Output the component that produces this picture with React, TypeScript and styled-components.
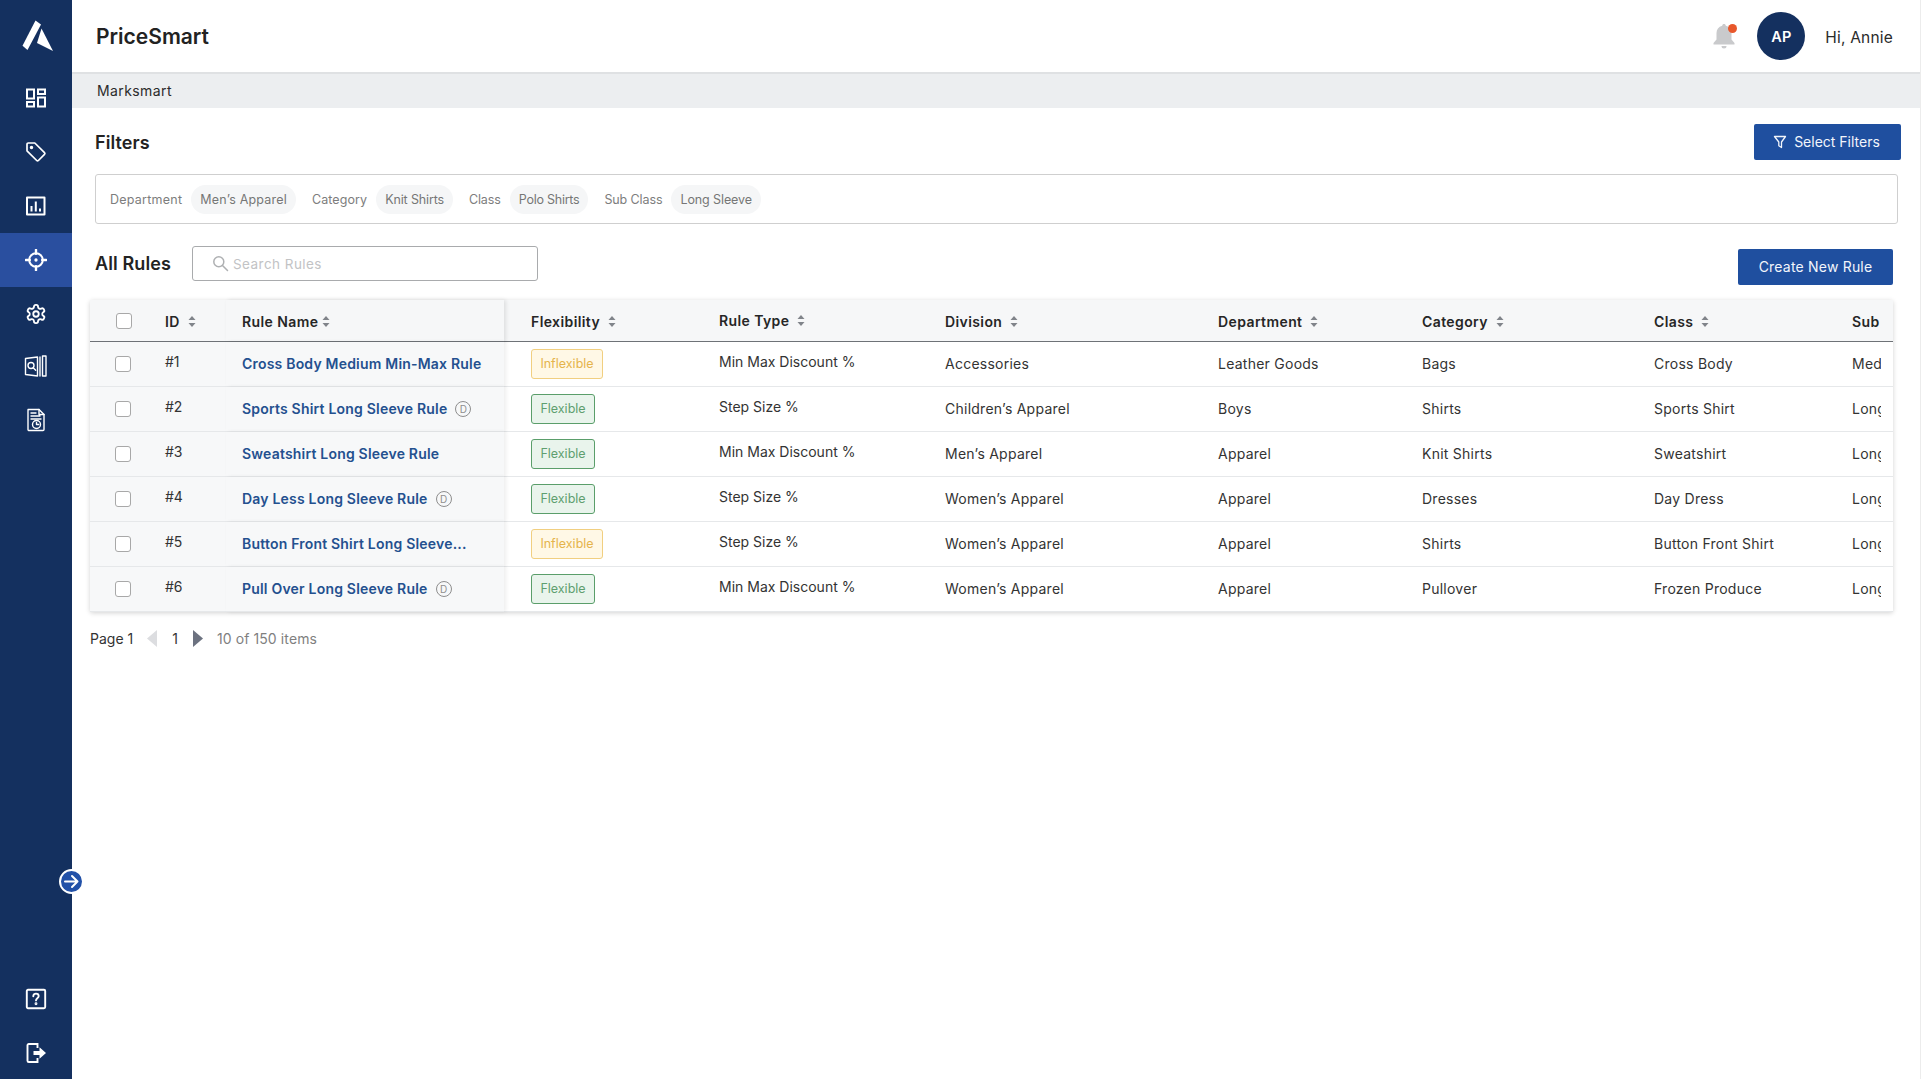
import React from "react";
import styled, { createGlobalStyle } from "styled-components";

const Global = createGlobalStyle`
  html, body { margin: 0; padding: 0; background: #fff; }
  body { font-family: Inter, "Noto Sans", "Liberation Sans", sans-serif; color: #2a2a2a; overflow: hidden; }
  * { box-sizing: border-box; }
`;

const Shell = styled.div`
  display: flex;
  width: 1921px;
  height: 1079px;
  border-right: 1px solid #ececec;
`;
const Sidebar = styled.aside`
  width: 72px;
  flex: none;
  background: #14305f;
  display: flex;
  flex-direction: column;
  position: relative;
`;
const LogoSlot = styled.div`
  height: 71px;
  display: flex;
  align-items: center;
  justify-content: center;
`;
const NavItem = styled.div<{ $active?: boolean; $h?: number }>`
  height: ${(p) => p.$h ?? 54}px;
  display: flex;
  align-items: center;
  justify-content: center;
  background: ${(p) => (p.$active ? "#2a4f9f" : "transparent")};
`;
const NavSpacer = styled.div`
  flex: 1;
`;
const Collapse = styled.button`
  position: absolute;
  left: 59px;
  top: 869px;
  width: 25px;
  height: 25px;
  padding: 0;
  border-radius: 50%;
  border: 2px solid #fff;
  background: #2251a8;
  display: flex;
  align-items: center;
  justify-content: center;
`;
const Main = styled.main`
  flex: 1;
  min-width: 0;
  display: flex;
  flex-direction: column;
`;
const Header = styled.header`
  height: 72px;
  flex: none;
  display: flex;
  align-items: center;
  padding: 0 27px 0 24px;
`;
const Brand = styled.div`
  font-size: 21px;
  font-weight: 600;
  color: #222;
  flex: 1;
`;
const Bell = styled.div`
  position: relative;
  width: 26px;
  height: 28px;
  margin-right: 20px;
`;
const BellDot = styled.span`
  position: absolute;
  top: 2px;
  right: 0;
  width: 9px;
  height: 9px;
  border-radius: 50%;
  background: #e8572b;
`;
const Avatar = styled.div`
  width: 48px;
  height: 48px;
  border-radius: 50%;
  background: #14305f;
  color: #fff;
  font-size: 14.5px;
  font-weight: 600;
  display: flex;
  align-items: center;
  justify-content: center;
`;
const Greeting = styled.div`
  margin-left: 20px;
  padding-top: 2px;
  font-size: 15.5px;
  letter-spacing: 0.2px;
  color: #2a2a2a;
`;
const Crumb = styled.div`
  height: 36px;
  flex: none;
  background: #eceef0;
  border-top: 2px solid #dfe1e3;
  padding: 0 0 2px 25px;
  display: flex;
  align-items: center;
  font-size: 14px;
  letter-spacing: 0.4px;
  color: #2b2b2b;
`;
const Content = styled.div`
  padding: 16px 19px 0 23px;
`;
const SpreadRow = styled.div`
  display: flex;
  align-items: center;
  justify-content: space-between;
`;
const SectionTitle = styled.h2`
  margin: 0;
  font-size: 18px;
  font-weight: 600;
  letter-spacing: 0.1px;
  color: #232323;
`;
const PrimaryButton = styled.button`
  height: 36px;
  border: 0;
  border-radius: 2px;
  background: #1f4f9f;
  color: #f2f5fb;
  font: 400 14px Inter, "Noto Sans", sans-serif;
  display: flex;
  align-items: center;
  justify-content: center;
  gap: 7px;
  padding: 0 0 1px;
`;
const FilterButton = styled(PrimaryButton)`
  width: 147px;
  padding-right: 2px;
`;
const CreateButton = styled(PrimaryButton)`
  width: 155px;
  margin-top: 3px;
  margin-right: 8px;
  letter-spacing: 0.2px;
`;
const FilterBox = styled.div`
  margin: 14px 3px 0 0;
  height: 50px;
  border: 1px solid #cfcfcf;
  border-radius: 3px;
  padding-left: 14px;
  display: flex;
  align-items: center;
`;
const FilterLabel = styled.span<{ $track: number }>`
  font-size: 12.5px;
  letter-spacing: ${(p) => p.$track}px;
  color: #7d7d7d;
  margin-right: 9px;
`;
const Chip = styled.span<{ $track: number }>`
  height: 29px;
  padding: 0 9px;
  border-radius: 15px;
  background: #f5f6f7;
  font-size: 12.5px;
  letter-spacing: ${(p) => p.$track}px;
  color: #767676;
  display: flex;
  align-items: center;
  margin-right: 16px;
`;
const RulesBar = styled.div`
  display: flex;
  align-items: flex-start;
  margin-top: 22px;
`;
const RulesTitle = styled(SectionTitle)`
  line-height: 35px;
  width: 97px;
`;
const Search = styled.div`
  width: 346px;
  height: 35px;
  border: 1px solid #a9abad;
  border-radius: 3px;
  display: flex;
  align-items: center;
  gap: 4px;
  padding-left: 19px;
  font-size: 13.5px;
  letter-spacing: 0.45px;
  color: #c2c3c5;
`;
const BarSpacer = styled.div`
  flex: 1;
`;
const TableCard = styled.div`
  margin: 15px 8px 0 -5px;
  box-shadow: 0 1px 5px rgba(0, 0, 0, 0.18);
  border-radius: 2px;
`;
const Table = styled.table`
  width: 1803px;
  table-layout: fixed;
  border-collapse: separate;
  border-spacing: 0;
`;
const Th = styled.th<{ $frozen?: boolean; $edge?: boolean; $pad?: number; $raised?: boolean }>`
  height: 41.5px;
  padding: ${(p) => (p.$raised ? 0 : 2)}px 0 0 ${(p) => p.$pad ?? 16}px;
  text-align: left;
  font-size: 14px;
  font-weight: 600;
  letter-spacing: 0.4px;
  color: #262626;
  background: #f6f7f8;
  border-bottom: 1px solid #6e7277;
  white-space: nowrap;
  overflow: hidden;
  ${(p) => p.$frozen && "position: sticky; left: 0; z-index: 1; overflow: visible;"}
  ${(p) => p.$edge && "box-shadow: 2px 0 4px rgba(0,0,0,.1);"}
`;
const Td = styled.td<{ $frozen?: boolean; $edge?: boolean; $pad?: number; $raised?: boolean }>`
  height: 45px;
  padding: 0 0 ${(p) => (p.$raised ? 4 : 0)}px ${(p) => p.$pad ?? 16}px;
  font-size: 14px;
  letter-spacing: ${(p) => (p.$raised ? 0 : 0.25)}px;
  color: #333;
  background: ${(p) => (p.$frozen ? "#f7f8f9" : "#fff")};
  border-bottom: 1px solid #e6e8ea;
  white-space: nowrap;
  ${(p) => p.$frozen && "position: sticky; left: 0; z-index: 1;"}
  ${(p) => p.$edge && "box-shadow: 2px 0 4px rgba(0,0,0,.07);"}
`;
const ClippedText = styled.div`
  width: 29px;
  overflow: hidden;
`;
const Check = styled.span`
  display: block;
  width: 16px;
  height: 16px;
  background: #fff;
  border: 1px solid #a8a8a8;
  border-radius: 3px;
`;
const SortLabel = styled.span<{ $gap?: number }>`
  display: inline-flex;
  align-items: center;
  gap: ${(p) => p.$gap ?? 8}px;
`;
const RuleLink = styled.span`
  display: inline-flex;
  align-items: center;
  gap: 8px;
  font-weight: 600;
  letter-spacing: 0.2px;
  color: #24508f;
`;
const DraftMark = styled.span`
  width: 16px;
  height: 16px;
  border: 1px solid #8e8e8e;
  border-radius: 50%;
  font-size: 10px;
  font-weight: 400;
  letter-spacing: 0;
  color: #8e8e8e;
  display: inline-flex;
  align-items: center;
  justify-content: center;
`;
const Badge = styled.span<{ $ok: boolean }>`
  display: inline-flex;
  align-items: center;
  justify-content: center;
  height: 30px;
  width: ${(p) => (p.$ok ? 64 : 72)}px;
  font-size: 12.5px;
  letter-spacing: 0;
  border-radius: 3px;
  border: 1px solid ${(p) => (p.$ok ? "#5a9e6a" : "#f1cf80")};
  background: ${(p) => (p.$ok ? "#e9f4ec" : "#fff8e6")};
  color: ${(p) => (p.$ok ? "#5f9f70" : "#e5b44c")};
`;
const Pager = styled.div`
  margin: 15px 0 0 -5px;
  height: 24px;
  display: flex;
  align-items: center;
  font-size: 14px;
  color: #333;
`;
const PageNumber = styled.span`
  margin: 0 15px;
`;
const PageInfo = styled.span`
  margin-left: 14px;
  letter-spacing: 0.1px;
  color: #7f7f7f;
`;
const PrevSlot = styled.span`
  display: flex;
  margin-left: 14px;
`;

const stroke = { fill: "none", stroke: "#fff", strokeWidth: 1.7, strokeLinejoin: "round" as const, strokeLinecap: "round" as const };

const Logo = () => (
  <svg width="36" height="34" viewBox="18 18 36 34" fill="#fff">
    <path d="M35.500 19.500l5.500 4-13.500 25.500-5-4.200z" />
    <path d="M41.500 27.500L53 50l-16-8z" />
  </svg>
);
const GridIcon = () => (
  <svg width="22" height="22" viewBox="0 0 22 22" {...stroke} strokeWidth={2} strokeLinejoin="miter">
    <rect x="2" y="2.500" width="7" height="9" /><rect x="13" y="2.500" width="7" height="4.500" />
    <rect x="13" y="10.500" width="7" height="9" /><rect x="2" y="15" width="7" height="4.500" />
  </svg>
);
const TagIcon = () => (
  <svg width="22" height="22" viewBox="0 0 22 22" {...stroke}>
    <path d="M2 3.200c0-.7.5-1.200 1.200-1.200h6.600l9.700 9.700c.5.5.5 1.200 0 1.700l-6.100 6.100c-.5.5-1.200.5-1.700 0L2 9.800z" />
    <circle cx="6.500" cy="6.500" r=".9" />
  </svg>
);
const ChartIcon = () => (
  <svg width="22" height="22" viewBox="0 0 22 22" {...stroke}>
    <rect x="2" y="2.500" width="17.500" height="17" strokeWidth="2" />
    <path d="M6.500 16.500V11M10.800 16.500V6.500M15 16.500V13.500" strokeWidth="2" strokeLinecap="butt" />
  </svg>
);
const TargetIcon = () => (
  <svg width="22" height="22" viewBox="0 0 22 22" {...stroke}>
    <circle cx="11" cy="11" r="6.800" strokeWidth="2" />
    <path d="M11 .8v4M11 17.200v4M.8 11h4M17.200 11h4" strokeWidth="2.400" />
    <circle cx="11" cy="11" r=".8" fill="#fff" />
  </svg>
);
const GearIcon = () => (
  <svg width="22" height="22" viewBox="0 0 24 24" {...stroke} strokeWidth={2}>
    <path d="M12.220 2h-.440a2 2 0 0 0-2 2v.180a2 2 0 0 1-1 1.730l-.430.250a2 2 0 0 1-2 0l-.150-.080a2 2 0 0 0-2.730.730l-.220.380a2 2 0 0 0 .730 2.730l.150.100a2 2 0 0 1 1 1.720v.510a2 2 0 0 1-1 1.740l-.150.090a2 2 0 0 0-.730 2.730l.220.380a2 2 0 0 0 2.730.730l.150-.080a2 2 0 0 1 2 0l.430.250a2 2 0 0 1 1 1.730V20a2 2 0 0 0 2 2h.440a2 2 0 0 0 2-2v-.180a2 2 0 0 1 1-1.730l.430-.250a2 2 0 0 1 2 0l.150.080a2 2 0 0 0 2.730-.730l.220-.390a2 2 0 0 0-.730-2.730l-.150-.080a2 2 0 0 1-1-1.740v-.500a2 2 0 0 1 1-1.740l.150-.090a2 2 0 0 0 .730-2.730l-.220-.380a2 2 0 0 0-2.730-.730l-.150.080a2 2 0 0 1-2 0l-.430-.250a2 2 0 0 1-1-1.730V4a2 2 0 0 0-2-2z" />
    <circle cx="12" cy="12" r="3" />
  </svg>
);
const CatalogIcon = () => (
  <svg width="24" height="24" viewBox="0 0 24 24" {...stroke} strokeWidth={1.400}>
    <path d="M1.500 4.500l12 -1.500v19l-12-1.500z" />
    <circle cx="7" cy="11.500" r="3" />
    <path d="M9.200 13.800l2.500 2.500" />
    <path d="M16 3v19M18.500 2v20M22 2v20M18.500 2H22M18.500 22H22" />
  </svg>
);
const ReportIcon = () => (
  <svg width="22" height="24" viewBox="0 0 22 24" {...stroke} strokeWidth={1.400}>
    <path d="M3 1.500h11l5 5v15a1 1 0 0 1-1 1H4a1 1 0 0 1-1-1v-19a1 1 0 0 1 1-1z" />
    <path d="M14 1.500v5h5M6 5h5M6 8h9M6 11h10" />
    <circle cx="11.500" cy="16.500" r="4" />
    <path d="M11.500 14.500v2h2.200" />
  </svg>
);
const HelpIcon = () => (
  <svg width="22" height="22" viewBox="0 0 22 22" {...stroke} strokeWidth={1.900}>
    <rect x="1.800" y="1.800" width="18.400" height="18.400" rx="1.200" />
    <path d="M8.300 8.200c0-1.600 1.200-2.600 2.700-2.600s2.700 1 2.700 2.500c0 2.200-2.700 2.200-2.700 4.300" />
    <circle cx="11" cy="15.800" r=".5" fill="#fff" />
  </svg>
);
const LogoutIcon = () => (
  <svg width="22" height="22" viewBox="0 0 22 22">
    <path d="M12.500 6V2H3.800A1.300 1.300 0 0 0 2.500 3.300v15.400A1.300 1.300 0 0 0 3.800 20h8.700v-4" fill="none" stroke="#fff" strokeWidth="1.900" />
    <path d="M8.500 9h6V5.200L21 11l-6.500 5.800V13h-6z" fill="#fff" />
  </svg>
);
const ArrowIcon = () => (
  <svg width="17" height="17" viewBox="0 0 17 17" fill="none" stroke="#fff" strokeWidth="2" strokeLinecap="round" strokeLinejoin="round">
    <path d="M2 8.500h12.500M9 3l5.500 5.500L9 14" />
  </svg>
);
const BellIcon = () => (
  <svg width="26" height="28" viewBox="0 0 26 28" fill="#c9cacc">
    <path d="M13 2c-1 0-1.700.7-1.800 1.700C7.500 4.700 5.500 7.500 5.500 11v6.500L2.500 21v1.500h21V21l-3-3.500V11c0-3.500-2-6.300-5.700-7.300C14.700 2.700 14 2 13 2z" />
    <path d="M10.500 24h5a2.500 2.500 0 0 1-5 0z" />
  </svg>
);
const FunnelIcon = () => (
  <svg width="14" height="14" viewBox="0 0 14 14" fill="none" stroke="#f2f5fb" strokeWidth="1.300" strokeLinejoin="round">
    <path d="M1.500 1.500h11L8.500 7v5.500L5.800 10.800V7z" />
  </svg>
);
const SearchIcon = () => (
  <svg width="17" height="17" viewBox="0 0 17 17" fill="none" stroke="#aeb0b2" strokeWidth="1.500" strokeLinecap="round">
    <circle cx="6.800" cy="6.800" r="5" /><path d="M10.500 10.500l5 5" />
  </svg>
);
const SortIcon = () => (
  <svg width="8" height="11" viewBox="0 0 8 11" fill="#80848a">
    <path d="M4 0l3.500 4h-7zM4 11L.5 7h7z" />
  </svg>
);
const PageArrow = ({ dir, color }: { dir: "l" | "r"; color: string }) => (
  <svg width="10" height="17" viewBox="0 0 10 17" fill={color}>
    <path d={dir === "l" ? "M10 0v17L0 8.500z" : "M0 0v17l10-8.500z"} />
  </svg>
);

type Row = { id: string; name: string; draft: boolean; ok: boolean; type: string; division: string; dept: string; cat: string; cls: string; sub: string };
const rows: Row[] = [
  { id: "#1", name: "Cross Body Medium Min-Max Rule", draft: false, ok: false, type: "Min Max Discount %", division: "Accessories", dept: "Leather Goods", cat: "Bags", cls: "Cross Body", sub: "Medium" },
  { id: "#2", name: "Sports Shirt Long Sleeve Rule", draft: true, ok: true, type: "Step Size %", division: "Children’s Apparel", dept: "Boys", cat: "Shirts", cls: "Sports Shirt", sub: "Long Sleeve" },
  { id: "#3", name: "Sweatshirt Long Sleeve Rule", draft: false, ok: true, type: "Min Max Discount %", division: "Men’s Apparel", dept: "Apparel", cat: "Knit Shirts", cls: "Sweatshirt", sub: "Long Sleeve" },
  { id: "#4", name: "Day Less Long Sleeve Rule", draft: true, ok: true, type: "Step Size %", division: "Women’s Apparel", dept: "Apparel", cat: "Dresses", cls: "Day Dress", sub: "Long Sleeve" },
  { id: "#5", name: "Button Front Shirt Long Sleeve...", draft: false, ok: false, type: "Step Size %", division: "Women’s Apparel", dept: "Apparel", cat: "Shirts", cls: "Button Front Shirt", sub: "Long Sleeve" },
  { id: "#6", name: "Pull Over Long Sleeve Rule", draft: true, ok: true, type: "Min Max Discount %", division: "Women’s Apparel", dept: "Apparel", cat: "Pullover", cls: "Frozen Produce", sub: "Long Sleeve" },
];
const filters = [
  { label: "Department", labelTrack: 0.25, value: "Men’s Apparel", valueTrack: 0.2 },
  { label: "Category", labelTrack: 0.1, value: "Knit Shirts", valueTrack: -0.15 },
  { label: "Class", labelTrack: -0.1, value: "Polo Shirts", valueTrack: -0.25 },
  { label: "Sub Class", labelTrack: -0.1, value: "Long Sleeve", valueTrack: -0.1 },
];
const widths = [59, 77, 278, 199, 226, 273, 204, 232, 198, 57];

export default function App() {
  return (
    <Shell>
      <Global />
      <Sidebar>
        <LogoSlot><Logo /></LogoSlot>
        <NavItem><GridIcon /></NavItem>
        <NavItem><TagIcon /></NavItem>
        <NavItem><ChartIcon /></NavItem>
        <NavItem $active><TargetIcon /></NavItem>
        <NavItem><GearIcon /></NavItem>
        <NavItem $h={50}><CatalogIcon /></NavItem>
        <NavItem $h={58}><ReportIcon /></NavItem>
        <NavSpacer />
        <NavItem $h={56}><HelpIcon /></NavItem>
        <NavItem $h={52}><LogoutIcon /></NavItem>
        <Collapse><ArrowIcon /></Collapse>
      </Sidebar>
      <Main>
        <Header>
          <Brand>PriceSmart</Brand>
          <Bell><BellIcon /><BellDot /></Bell>
          <Avatar>AP</Avatar>
          <Greeting>Hi, Annie</Greeting>
        </Header>
        <Crumb>Marksmart</Crumb>
        <Content>
          <SpreadRow>
            <SectionTitle>Filters</SectionTitle>
            <FilterButton><FunnelIcon />Select Filters</FilterButton>
          </SpreadRow>
          <FilterBox>
            {filters.map((f) => (
              <React.Fragment key={f.label}>
                <FilterLabel $track={f.labelTrack}>{f.label}</FilterLabel>
                <Chip $track={f.valueTrack}>{f.value}</Chip>
              </React.Fragment>
            ))}
          </FilterBox>
          <RulesBar>
            <RulesTitle>All Rules</RulesTitle>
            <Search><SearchIcon />Search Rules</Search>
            <BarSpacer />
            <CreateButton>Create New Rule</CreateButton>
          </RulesBar>
          <TableCard>
            <Table>
              <colgroup>
                {widths.map((w, i) => <col key={i} style={{ width: w }} />)}
              </colgroup>
              <thead>
                <tr>
                  <Th $frozen $pad={26}><Check /></Th>
                  <Th $frozen><SortLabel>ID<SortIcon /></SortLabel></Th>
                  <Th $frozen $edge><SortLabel $gap={4}>Rule Name<SortIcon /></SortLabel></Th>
                  <Th $pad={27}><SortLabel>Flexibility<SortIcon /></SortLabel></Th>
                  <Th $raised><SortLabel>Rule Type<SortIcon /></SortLabel></Th>
                  <Th><SortLabel>Division<SortIcon /></SortLabel></Th>
                  <Th><SortLabel>Department<SortIcon /></SortLabel></Th>
                  <Th><SortLabel>Category<SortIcon /></SortLabel></Th>
                  <Th><SortLabel>Class<SortIcon /></SortLabel></Th>
                  <Th>Sub</Th>
                </tr>
              </thead>
              <tbody>
                {rows.map((r) => (
                  <tr key={r.id}>
                    <Td $frozen $pad={25}><Check /></Td>
                    <Td $frozen $raised>{r.id}</Td>
                    <Td $frozen $edge>
                      <RuleLink>{r.name}{r.draft && <DraftMark>D</DraftMark>}</RuleLink>
                    </Td>
                    <Td $pad={27}><Badge $ok={r.ok}>{r.ok ? "Flexible" : "Inflexible"}</Badge></Td>
                    <Td $raised>{r.type}</Td>
                    <Td>{r.division}</Td>
                    <Td>{r.dept}</Td>
                    <Td>{r.cat}</Td>
                    <Td>{r.cls}</Td>
                    <Td><ClippedText>{r.sub}</ClippedText></Td>
                  </tr>
                ))}
              </tbody>
            </Table>
          </TableCard>
          <Pager>
            Page 1
            <PrevSlot><PageArrow dir="l" color="#dcdde0" /></PrevSlot>
            <PageNumber>1</PageNumber>
            <PageArrow dir="r" color="#6c7280" />
            <PageInfo>10 of 150 items</PageInfo>
          </Pager>
        </Content>
      </Main>
    </Shell>
  );
}
